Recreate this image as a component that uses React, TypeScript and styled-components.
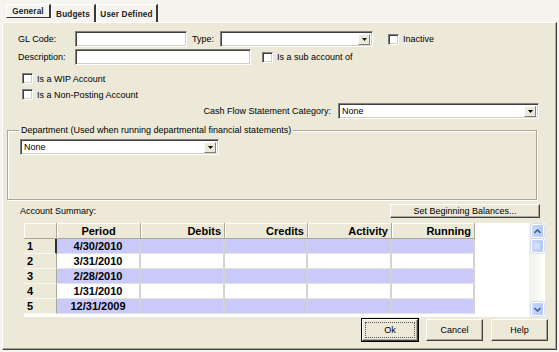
import React from "react";
import styled, { createGlobalStyle } from "styled-components";

const Global = createGlobalStyle`
  html, body { margin: 0; padding: 0; background: #F5F4EF; }
  body { font-family: "Liberation Sans", Arial, sans-serif; color: #000; }
  #root { width: 559px; height: 352px; }
`;

const Screen = styled.div`
  width: 559px;
  height: 352px;
  background: #F5F4EF;
  display: flex;
  flex-direction: column;
  overflow: hidden;
`;

const TabStrip = styled.div`
  height: 22px;
  display: flex;
  align-items: flex-start;
  padding: 4px 0 0 6px;
  box-sizing: border-box;
`;

const Tab = styled.div<{ $active?: boolean; $w: number }>`
  width: ${(p) => p.$w}px;
  height: ${(p) => (p.$active ? 14 : 18)}px;
  box-sizing: border-box;
  display: flex;
  align-items: center;
  justify-content: center;
  font-size: 8.2px;
  font-weight: bold;
  letter-spacing: 0.15px;
  color: #222;
  border-top: 1px solid #fff;
  border-left: 1px solid #fff;
  border-right: 2px solid #3a3a3a;
  border-bottom: ${(p) => (p.$active ? "1px solid #333" : "none")};
  padding-top: 1px;
`;

const Panel = styled.div`
  flex: 1;
  margin: 0 2px 2px 2px;
  background: #ECE9D8;
  border-top: 1px solid #fff;
  border-left: 1px solid #fff;
  border-right: 1px solid #404040;
  border-bottom: 1px solid #404040;
  box-shadow: inset -1px -1px 0 #ACA899;
  display: flex;
  flex-direction: column;
`;

const Row = styled.div<{ $mt: number; $h: number; $pl?: number; $pr?: number; $end?: boolean }>`
  margin-top: ${(p) => p.$mt}px;
  height: ${(p) => p.$h}px;
  padding-left: ${(p) => p.$pl ?? 0}px;
  padding-right: ${(p) => p.$pr ?? 0}px;
  display: flex;
  align-items: center;
  justify-content: ${(p) => (p.$end ? "flex-end" : "flex-start")};
  flex-shrink: 0;
`;

const Label = styled.span<{ $w?: number; $ml?: number }>`
  font-size: 9px;
  white-space: nowrap;
  ${(p) => (p.$w ? `width: ${p.$w}px;` : "")}
  margin-left: ${(p) => p.$ml ?? 0}px;
  flex-shrink: 0;
`;

const TextBox = styled.div<{ $w: number }>`
  width: ${(p) => p.$w}px;
  height: 16px;
  box-sizing: border-box;
  background: #fff;
  border-top: 1px solid #808080;
  border-left: 1px solid #808080;
  border-right: 1px solid #fff;
  border-bottom: 1px solid #fff;
  box-shadow: inset 1px 1px 0 #404040, inset -1px -1px 0 #D4D0C8;
  display: flex;
  align-items: center;
  padding-left: 3px;
  font-size: 9px;
  flex-shrink: 0;
`;

const ComboBox = styled(TextBox)`
  justify-content: space-between;
  padding-right: 2px;
`;

const ArrowBtn = styled.div`
  width: 12px;
  height: 11px;
  box-sizing: border-box;
  background: #ECE9D8;
  border-top: 1px solid #fff;
  border-left: 1px solid #fff;
  border-right: 1px solid #808080;
  border-bottom: 1px solid #808080;
  display: flex;
  align-items: center;
  justify-content: center;
`;

const Combo: React.FC<{ w: number; value?: string }> = ({ w, value }) => (
  <ComboBox $w={w}>
    <span>{value}</span>
    <ArrowBtn>
      <svg width="5" height="3" viewBox="0 0 5 3">
        <path d="M0 0h5L2.5 3z" fill="#000" />
      </svg>
    </ArrowBtn>
  </ComboBox>
);

const CheckBox = styled.div<{ $ml?: number }>`
  width: 11px;
  height: 11px;
  box-sizing: border-box;
  background: #fff;
  border-top: 1px solid #808080;
  border-left: 1px solid #808080;
  border-right: 1px solid #fff;
  border-bottom: 1px solid #fff;
  box-shadow: inset 1px 1px 0 #404040, inset -1px -1px 0 #D4D0C8;
  margin-left: ${(p) => p.$ml ?? 0}px;
  margin-right: 4px;
  flex-shrink: 0;
`;

const GroupBox = styled.div`
  position: relative;
  margin: 11px 0 0 4px;
  width: 530px;
  height: 70px;
  box-sizing: border-box;
  border: 1px solid #ACA899;
  box-shadow: 1px 1px 0 #fff, inset 1px 1px 0 #fff;
  flex-shrink: 0;
  display: flex;
  flex-direction: column;
`;

const Legend = styled.span`
  position: absolute;
  top: -6px;
  left: 11px;
  padding: 0 2px;
  background: #ECE9D8;
  font-size: 9px;
  line-height: 11px;
  white-space: nowrap;
`;

const Button = styled.div<{ $w: number; $h: number; $focus?: boolean }>`
  width: ${(p) => p.$w}px;
  height: ${(p) => p.$h}px;
  box-sizing: border-box;
  background: #ECE9D8;
  border-top: 1px solid #fff;
  border-left: 1px solid #fff;
  border-right: 1px solid #404040;
  border-bottom: 1px solid #404040;
  box-shadow: inset -1px -1px 0 #ACA899;
  ${(p) => (p.$focus ? "outline: 1px solid #000; outline-offset: 0;" : "")}
  display: flex;
  align-items: center;
  justify-content: center;
  font-size: 9px;
  flex-shrink: 0;
  padding: 2px;
`;

const FocusRect = styled.div`
  width: 100%;
  height: 100%;
  box-sizing: border-box;
  border: 1px dotted #555;
  display: flex;
  align-items: center;
  justify-content: center;
`;

const GridWrap = styled.div`
  margin: 5px 0 0 21px;
  width: 521px;
  height: 94px;
  background: #fff;
  display: flex;
  flex-shrink: 0;
`;

const Table = styled.div`
  display: grid;
  grid-template-columns: 33px 84px 84px 83px 84px 83px;
  grid-template-rows: 16px repeat(5, 15px);
  align-self: flex-start;
  background: #ECE9D8;
`;

const HeadCell = styled.div<{ $align?: string }>`
  box-sizing: border-box;
  background: #ECE9D8;
  border-right: 1px solid #ACA899;
  border-bottom: 1px solid #ACA899;
  box-shadow: inset 1px 1px 0 #fff;
  font-size: 11px;
  font-weight: bold;
  display: flex;
  align-items: center;
  justify-content: ${(p) => p.$align ?? "flex-end"};
  padding: 0 3px;
  white-space: nowrap;
`;

const RowHead = styled.div<{ $current?: boolean }>`
  box-sizing: border-box;
  background: #ECE9D8;
  border-right: ${(p) => (p.$current ? "2px solid #303030" : "1px solid #ACA899")};
  border-bottom: 1px solid #F8F7F2;
  font-size: 11px;
  font-weight: bold;
  display: flex;
  align-items: center;
  padding-left: 3px;
`;

const Cell = styled.div<{ $alt: boolean; $center?: boolean }>`
  box-sizing: border-box;
  background: ${(p) => (p.$alt ? "#CACAFA" : "#fff")};
  border-right: 2px solid #D4D3CF;
  border-bottom: 1px solid #E4E3E0;
  font-size: 11px;
  font-weight: bold;
  display: flex;
  align-items: center;
  justify-content: center;
  white-space: nowrap;
`;

const Filler = styled.div`
  flex: 1;
  background: #fff;
`;

const ScrollBar = styled.div`
  width: 16px;
  background: linear-gradient(to right, #F3F1EC, #FEFEFB);
  display: flex;
  flex-direction: column;
  align-items: center;
  padding: 1px 0;
  box-sizing: border-box;
`;

const ScrollBtn = styled.div<{ $h: number }>`
  width: 13px;
  height: ${(p) => p.$h}px;
  box-sizing: border-box;
  border: 1px solid #fff;
  border-radius: 2px;
  background: linear-gradient(to right, #C7D6FB, #B5C9F7);
  box-shadow: 0 0 0 0.5px #B4C6EE;
  display: flex;
  align-items: center;
  justify-content: center;
`;

const Track = styled.div`
  flex: 1;
`;

const dates = ["4/30/2010", "3/31/2010", "2/28/2010", "1/31/2010", "12/31/2009"];

export default function App() {
  return (
    <Screen>
      <Global />
      <TabStrip>
        <Tab $active $w={45}>General</Tab>
        <Tab $w={45}>Budgets</Tab>
        <Tab $w={62}>User Defined</Tab>
      </TabStrip>
      <Panel>
        <Row $mt={8} $h={16} $pl={15}>
          <Label $w={57}>GL Code:</Label>
          <TextBox $w={112} />
          <Label $w={28} $ml={5}>Type:</Label>
          <Combo w={153} />
          <CheckBox $ml={15} />
          <Label>Inactive</Label>
        </Row>
        <Row $mt={2} $h={16} $pl={15}>
          <Label $w={57}>Description:</Label>
          <TextBox $w={176} />
          <CheckBox $ml={11} />
          <Label>Is a sub account of</Label>
        </Row>
        <Row $mt={7} $h={13} $pl={19}>
          <CheckBox />
          <Label>Is a WIP Account</Label>
        </Row>
        <Row $mt={3} $h={13} $pl={19}>
          <CheckBox />
          <Label>Is a Non-Posting Account</Label>
        </Row>
        <Row $mt={2} $h={16} $pr={17} $end>
          <Label>Cash Flow Statement Category:</Label>
          <span style={{ width: 7 }} />
          <Combo w={201} value="None" />
        </Row>
        <GroupBox>
          <Legend>Department (Used when running departmental financial statements)</Legend>
          <Row $mt={8} $h={16} $pl={12}>
            <Combo w={199} value="None" />
          </Row>
        </GroupBox>
        <Row $mt={4} $h={14} $pl={17} $pr={16}>
          <Label>Account Summary:</Label>
          <Filler style={{ background: "transparent" }} />
          <Button $w={150} $h={14}>Set Beginning Balances...</Button>
        </Row>
        <GridWrap>
          <Table>
            <HeadCell />
            <HeadCell $align="center">Period</HeadCell>
            <HeadCell>Debits</HeadCell>
            <HeadCell>Credits</HeadCell>
            <HeadCell>Activity</HeadCell>
            <HeadCell>Running</HeadCell>
            {dates.map((d, i) => (
              <React.Fragment key={d}>
                <RowHead $current={i === 0}>{i + 1}</RowHead>
                <Cell $alt={i % 2 === 0}>{d}</Cell>
                <Cell $alt={i % 2 === 0} />
                <Cell $alt={i % 2 === 0} />
                <Cell $alt={i % 2 === 0} />
                <Cell $alt={i % 2 === 0} />
              </React.Fragment>
            ))}
          </Table>
          <Filler />
          <ScrollBar>
            <ScrollBtn $h={14}>
              <svg width="7" height="5" viewBox="0 0 7 5">
                <path d="M0.5 4L3.5 1L6.5 4" stroke="#4D6185" strokeWidth="1.6" fill="none" />
              </svg>
            </ScrollBtn>
            <ScrollBtn $h={14} style={{ marginTop: 1 }}>
              <svg width="6" height="6" viewBox="0 0 6 6">
                <path d="M0 1h6M0 3h6M0 5h6" stroke="#E6EEFC" strokeWidth="1" />
              </svg>
            </ScrollBtn>
            <Track />
            <ScrollBtn $h={14}>
              <svg width="7" height="5" viewBox="0 0 7 5">
                <path d="M0.5 1L3.5 4L6.5 1" stroke="#4D6185" strokeWidth="1.6" fill="none" />
              </svg>
            </ScrollBtn>
          </ScrollBar>
        </GridWrap>
        <Row $mt={2} $h={22} $pr={8} $end>
          <Button $w={56} $h={22} $focus>
            <FocusRect>Ok</FocusRect>
          </Button>
          <span style={{ width: 8 }} />
          <Button $w={57} $h={22}>Cancel</Button>
          <span style={{ width: 8 }} />
          <Button $w={57} $h={22}>Help</Button>
        </Row>
      </Panel>
    </Screen>
  );
}
